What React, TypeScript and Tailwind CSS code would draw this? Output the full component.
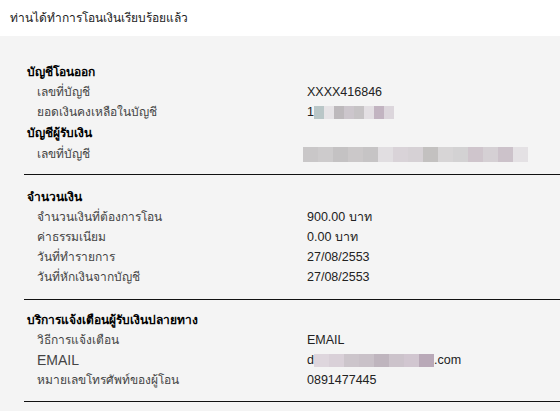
import React from "react";

const font = { fontFamily: "Tahoma, 'Liberation Sans', 'DejaVu Sans', sans-serif" };

type Row = { label: React.ReactNode; value: React.ReactNode; big?: boolean };

const Blur = ({ shades, h = 14, w = 15 }: { shades: string[]; h?: number; w?: number }) => (
  <span className="inline-flex align-middle">
    {shades.map((c, i) => (
      <span key={i} className="inline-block" style={{ background: c, height: h, width: w }} />
    ))}
  </span>
);

const Section = ({
  title,
  rows,
  extra,
  className,
}: {
  title: string;
  rows: Row[];
  extra?: { title: string; rows: Row[] };
  className?: string;
}) => {
  const renderRows = (rs: Row[]) =>
    rs.map((r, i) => (
      <div key={i} className="grid grid-cols-[283px_1fr] h-5 items-center">
        <div className={`pl-[13px] text-[#444] ${r.big ? "text-[14px]" : "text-[12px]"}`}>{r.label}</div>
        <div className="text-[12.5px] text-[#222]">{r.value}</div>
      </div>
    ));
  return (
    <div className={`border-b border-[#111] ${className ?? ""}`}>
      <div className="h-5 flex items-center pl-[3px] text-[12px] font-bold text-black">{title}</div>
      {renderRows(rows)}
      {extra && (
        <>
          <div className="h-[22px] flex items-center pl-[3px] text-[12px] font-bold text-black">{extra.title}</div>
          {renderRows(extra.rows)}
        </>
      )}
    </div>
  );
};

export default function App() {
  return (
    <div className="w-[560px] h-[411px] overflow-hidden bg-white" style={font}>
      <div className="h-9 pl-[10px] pt-[9px] text-[12px] text-[#222]">ท่านได้ทำการโอนเงินเรียบร้อยแล้ว</div>
      <div className="bg-[#f4f4f4] h-[375px] pl-6 pt-[26px]">
        <Section
          className="pb-[10px]"
          title="บัญชีโอนออก"
          rows={[
            { label: "เลขที่บัญชี", value: "XXXX416846" },
            {
              label: "ยอดเงินคงเหลือในบัญชี",
              value: (
                <span className="flex items-center">
                  <span>1</span>
                  <Blur
                    shades={["#b9c6c7", "#e6e3e6", "#bdb9bc", "#ccc6cc", "#c6c3c5", "#e3dfe3", "#c2b4c1", "#dcd6dc"]}
                    h={13}
                    w={10}
                  />
                </span>
              ),
            },
          ]}
          extra={{
            title: "บัญชีผู้รับเงิน",
            rows: [
              {
                label: "เลขที่บัญชี",
                value: (
                  <span className="flex -ml-1">
                    <Blur
                      shades={["#c9c7c8", "#cdcbcc", "#c4c2c3", "#cbc8c9", "#c6c4c5", "#e1dee1", "#d9d3d8", "#d6d1d5", "#c3c1c0", "#d7d5d6", "#d3d2d3", "#cfc5cc", "#d5d0d4", "#ccc2ca", "#e4e1e4"]}
                      h={15}
                    />
                  </span>
                ),
              },
            ],
          }}
        />
        <Section
          className="pt-3 pb-3"
          title="จำนวนเงิน"
          rows={[
            { label: "จำนวนเงินที่ต้องการโอน", value: "900.00 บาท" },
            { label: "ค่าธรรมเนียม", value: "0.00 บาท" },
            { label: "วันที่ทำรายการ", value: "27/08/2553" },
            { label: "วันที่หักเงินจากบัญชี", value: "27/08/2553" },
          ]}
        />
        <Section
          className="pt-2.5 pb-[11px]"
          title="บริการแจ้งเตือนผู้รับเงินปลายทาง"
          rows={[
            { label: "วิธีการแจ้งเตือน", value: "EMAIL" },
            {
              label: "EMAIL",
              big: true,
              value: (
                <span className="flex items-center">
                  <span>d</span>
                  <Blur shades={["#ded6dd", "#d9d0d8", "#ccc5cb", "#c9c1c8", "#bfb5be", "#ccc3cb", "#d1c6d0", "#b9a9b8"]} h={13} />
                  <span>.com</span>
                </span>
              ),
            },
            { label: "หมายเลขโทรศัพท์ของผู้โอน", value: "0891477445" },
          ]}
        />
      </div>
    </div>
  );
}
